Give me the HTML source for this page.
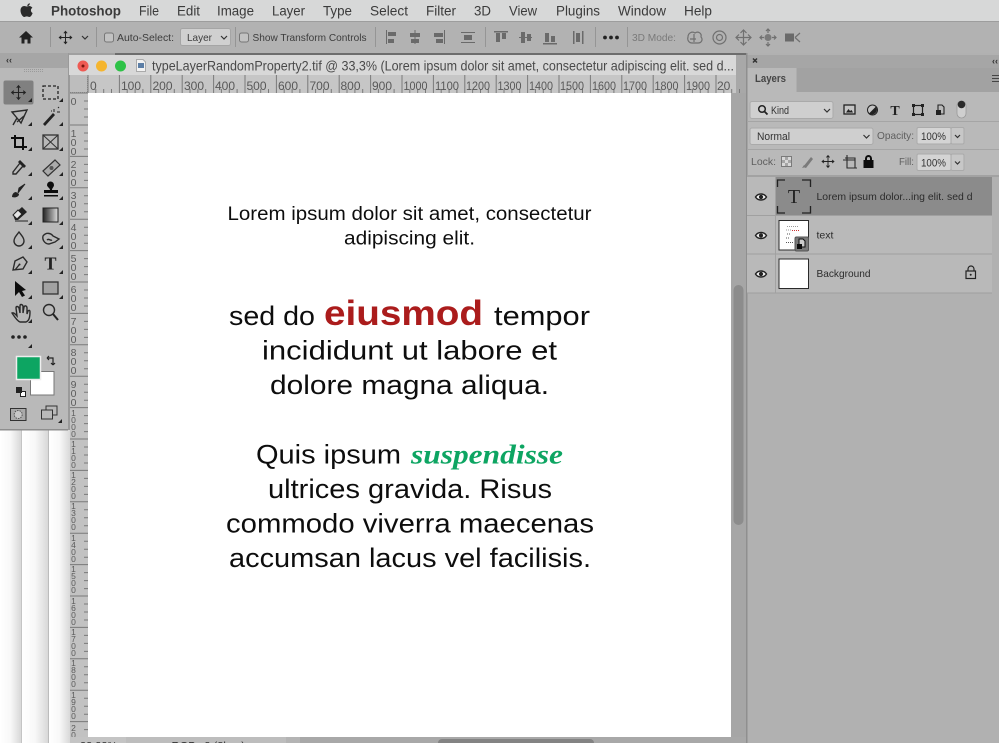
<!DOCTYPE html>
<html lang="en">
<head>
<meta charset="utf-8">
<title>Photoshop</title>
<style>
html,body{margin:0;padding:0;width:999px;height:743px;overflow:hidden;background:#fff}
svg{display:block;font-family:"Liberation Sans",sans-serif}
.m{font-size:13.5px;fill:#3a3a3a}
.o{font-size:10.5px;fill:#3c3c3c}
.r{font-size:12px;fill:#585858}
.v{font-size:10.5px;fill:#5c5c5c;text-anchor:middle}
.b{font-size:19px;fill:#111}
.c{font-size:27px;fill:#111}
.l{font-size:10px;fill:#333}
.s{fill:none;stroke:#2b2b2b;stroke-width:1.4}
.f{fill:#2b2b2b}
.g{fill:none;stroke:#6f6f6f;stroke-width:1.2}
.d{stroke:#959595;stroke-width:1}
</style>
</head>
<body>
<svg width="999" height="743" viewBox="0 0 999 743" xmlns="http://www.w3.org/2000/svg">
<defs>
<linearGradient id="sh" x1="0" x2="1" y1="0" y2="0"><stop offset="0" stop-color="#fff"/><stop offset=".5" stop-color="#f8f8f8"/><stop offset="1" stop-color="#d8d8d8"/></linearGradient>
<linearGradient id="gr" x1="0" x2="1" y1="0" y2="0"><stop offset="0" stop-color="#222"/><stop offset="1" stop-color="#ddd"/></linearGradient>
<filter id="bl" x="0" y="0" width="100%" height="100%"><feGaussianBlur stdDeviation="0.3"/></filter>
<g id="mv"><path d="M0-9V9M-9 0H9M-2.500-6.500 0-9.500 2.500-6.500M-2.500 6.500 0 9.500 2.500 6.500M-6.500-2.500-9.500 0-6.500 2.500M6.500-2.500 9.500 0 6.500 2.500" fill="none" stroke="#222" stroke-width="1.500"/></g>
<path id="cor" d="M0 4H4V0Z" fill="#222"/>
<g id="eye"><path d="M-5.500 0C-3-4 3-4 5.500 0 3 4-3 4-5.500 0Z" fill="#eee" stroke="#222" stroke-width="1.400"/><circle r="2.100" fill="#222"/></g>
<path id="tk" d="M0 0V18M7.800 14V18M15.700 14V18M23.500 14V18" stroke="#7a7a7a" stroke-width="1" fill="none"/>
<path id="vk" d="M0 0H18M14 8H18M14 16H18M14 24H18" stroke="#7a7a7a" stroke-width="1" fill="none"/>
</defs>

<g filter="url(#bl)">
<!-- background & pasteboard -->
<rect width="999" height="743" fill="#fff"/>
<rect x="0" y="430" width="21" height="313" fill="url(#sh)"/>
<rect x="21" y="430" width="1" height="313" fill="#c4c4c4"/>
<rect x="22" y="430" width="26" height="313" fill="url(#sh)"/>
<rect x="48" y="430" width="1" height="313" fill="#bcbcbc"/>
<rect x="49" y="430" width="21" height="313" fill="url(#sh)"/>
<rect x="68" y="53" width="680" height="377" fill="#a8a8a8"/>

<!-- menu bar -->
<rect width="999" height="21" fill="#d7d8d8"/>
<rect y="21" width="999" height="1" fill="#9d9d9d"/>
<path d="M29.800 3.200c-1.300.2-2.500 1.300-2.500 2.800 1.400.1 2.600-1.200 2.500-2.800ZM26.700 6.500c-.8 0-1.500-.5-2.400-.5-1.900 0-3.800 1.500-3.800 4.500 0 3 2.100 6.500 3.800 6.500.9 0 1.400-.6 2.500-.6 1.100 0 1.500.6 2.500.6 1.500 0 2.900-2.500 3.300-4-1.900-.7-2.500-3.900-.2-5.200-.8-1.200-2-1.800-3.100-1.800-1.100 0-1.800.5-2.600.5Z" fill="#2a2a2a"/>
<text x="51" y="15.500" class="m" font-weight="bold" textLength="70" lengthAdjust="spacingAndGlyphs">Photoshop</text>
<text x="139" y="15.500" class="m" textLength="20" lengthAdjust="spacingAndGlyphs">File</text>
<text x="177" y="15.500" class="m" textLength="23" lengthAdjust="spacingAndGlyphs">Edit</text>
<text x="217" y="15.500" class="m" textLength="37" lengthAdjust="spacingAndGlyphs">Image</text>
<text x="272" y="15.500" class="m" textLength="33" lengthAdjust="spacingAndGlyphs">Layer</text>
<text x="323" y="15.500" class="m" textLength="29" lengthAdjust="spacingAndGlyphs">Type</text>
<text x="370" y="15.500" class="m" textLength="38" lengthAdjust="spacingAndGlyphs">Select</text>
<text x="426" y="15.500" class="m" textLength="30" lengthAdjust="spacingAndGlyphs">Filter</text>
<text x="474" y="15.500" class="m" textLength="17" lengthAdjust="spacingAndGlyphs">3D</text>
<text x="509" y="15.500" class="m" textLength="28" lengthAdjust="spacingAndGlyphs">View</text>
<text x="556" y="15.500" class="m" textLength="44" lengthAdjust="spacingAndGlyphs">Plugins</text>
<text x="618" y="15.500" class="m" textLength="48" lengthAdjust="spacingAndGlyphs">Window</text>
<text x="684" y="15.500" class="m" textLength="28" lengthAdjust="spacingAndGlyphs">Help</text>

<!-- options bar -->
<rect y="22" width="999" height="31" fill="#b2b2b2"/>
<path d="M26 31 19 37.500H21.500V43.500H24.500V39.500H27.500V43.500H30.500V37.500H33Z" fill="#222"/>
<path class="d" d="M50.500 27V47M96.500 27V47M235.500 27V47M375.500 27V47M485.500 27V47M595.500 27V47M627.500 27V47"/>
<use href="#mv" transform="translate(65.500 37.500) scale(.65)"/>
<path d="M82 36 85 39 88 36" fill="none" stroke="#333" stroke-width="1.200"/>
<rect x="104.500" y="33" width="9" height="9" rx="2" fill="#c2c2c2" stroke="#777"/>
<text x="117" y="41" class="o" textLength="57" lengthAdjust="spacingAndGlyphs">Auto-Select:</text>
<rect x="180.500" y="28.500" width="50" height="17" rx="2" fill="#d0d0d0" stroke="#a5a5a5"/>
<text x="187" y="41" class="o" textLength="25" lengthAdjust="spacingAndGlyphs">Layer</text>
<path d="M221 36 224 39 227 36" fill="none" stroke="#333" stroke-width="1.200"/>
<rect x="239.500" y="33" width="9" height="9" rx="2" fill="#c2c2c2" stroke="#777"/>
<text x="252.500" y="41" class="o" textLength="114" lengthAdjust="spacingAndGlyphs">Show Transform Controls</text>
<!-- align icons -->
<g fill="#6a6a6a" stroke="none">
<path d="M386 30h1v14h-1zM388 32h8v4h-8zM388 39h6v4h-6z"/>
<path d="M414.500 30h1v14h-1zM410 33h10v4h-10zM411 39h8v4h-8z"/>
<path d="M444 30h1v14h-1zM434 33h9v4h-9zM436 39h7v4h-7z"/>
<path d="M461 32h14v1h-14zM461 42h14v1h-14zM464 35h8v5h-8z"/>
<path d="M494 31h14v1.500h-14zM496 33h4v9h-4zM502 33h4v6h-4z"/>
<path d="M519 37h13v1h-13zM521 32h4v11h-4zM527 34h4v7h-4z"/>
<path d="M543 43h14v1.500h-14zM545 33h4v9h-4zM551 36h4v6h-4z"/>
<path d="M573 31h1.500v13h-1.500zM582 31h1.500v13h-1.500zM576 33h4v9h-4z"/>
</g>
<circle cx="605" cy="37.500" r="1.900" fill="#222"/><circle cx="611" cy="37.500" r="1.900" fill="#222"/><circle cx="617" cy="37.500" r="1.900" fill="#222"/>
<text x="632" y="41" class="o" style="fill:#7a7a7a" textLength="44" lengthAdjust="spacingAndGlyphs">3D Mode:</text>
<!-- 3D icons -->
<path class="g" d="M688 37c0-4 4-6 7-4 3-2 7 0 6 4 2 2 1 6-3 6h-6c-3 0-5-3-4-6ZM690 39h6M694 34v8"/>
<circle class="g" cx="719.500" cy="37.500" r="6.500"/><circle class="g" cx="719.500" cy="37.500" r="3"/>
<path class="g" d="M743.500 30v15M736 37.500h15M740.500 33 743.500 30 746.500 33M740.500 42 743.500 45 746.500 42M739 34.500 736 37.500 739 40.500M748 34.500 751 37.500 748 40.500"/>
<circle cx="768" cy="37.500" r="3.500" fill="#7a7a7a"/>
<path class="g" d="M768 29v4M768 42v4M760 37.500h4M772 37.500h4M766 31 768 29 770 31M766 44 768 46 770 44M762 35.500 760 37.500 762 39.500M774 35.500 776 37.500 774 39.500"/>
<rect x="785" y="33.500" width="9" height="8" fill="#6a6a6a"/><path class="g" d="M795 37.500 800 33M795 37.500 800 42"/>

<!-- tool panel -->
<rect x="0" y="53" width="68" height="377" fill="#b9b9b9"/>
<rect x="0" y="53" width="68" height="15" fill="#a6a6a6"/>
<rect x="68" y="53" width="2" height="377" fill="#9a9a9a"/>
<rect y="429" width="68" height="1.500" fill="#8e8e8e"/>
<text x="6" y="63" font-size="9" fill="#333" font-weight="bold">‹‹</text>
<path d="M24 69.500h20M24 71.500h20" stroke="#9a9a9a" stroke-dasharray="1 1"/>
<rect x="3.500" y="80.500" width="30" height="24" rx="2" fill="#808080"/>
<use href="#mv" transform="translate(18.500 92.500) scale(.72)"/>
<rect x="43" y="86" width="15" height="13" fill="none" stroke="#222" stroke-width="1.300" stroke-dasharray="3 2"/>
<use href="#cor" x="28" y="98"/><use href="#cor" x="59" y="98"/>
<!-- lasso / magic -->
<path class="s" d="M12 112 27 110 21 123 17 118ZM17 118 13 125M24 116 17 122"/>
<path d="M43 124 53 113 55 115 45 126Z" fill="#222"/><path d="M54 109v3M57 112h3M51 111h1M58 108l1-1" stroke="#222"/>
<use href="#cor" x="28" y="122"/><use href="#cor" x="59" y="122"/>
<!-- crop / frame -->
<path d="M15 135V147H27M11 138H23V150" fill="none" stroke="#111" stroke-width="2"/>
<rect x="43" y="135" width="15" height="14" fill="none" stroke="#333" stroke-width="1.300"/>
<path d="M43 135 58 149M58 135 43 149" stroke="#333"/>
<use href="#cor" x="28" y="147"/><use href="#cor" x="59" y="147"/>
<!-- eyedropper / heal -->
<path class="s" d="M13 172 20 163 23 166 16 174 13 174Z"/><path d="M20 160 26 166 24 168 18 162Z" fill="#222"/>
<path d="M43 171 55 160 60 165 48 176Z" fill="#aaa" stroke="#333" stroke-width="1.200"/><circle cx="51.500" cy="168" r="2" fill="#555"/>
<use href="#cor" x="28" y="172"/><use href="#cor" x="59" y="172"/>
<!-- brush / stamp -->
<path d="M19 188 25 184 18 193Z" fill="#222" stroke="#222"/><path d="M12 197c0-3 2-5 4-5l3 2c0 3-4 4-7 3Z" fill="#222"/>
<path d="M47 185a3.500 3.500 0 1 1 7 0c0 2-2 3-2 5h6v3H44v-3h6c0-2-3-3-3-5ZM44 195h14v1.500H44Z" fill="#111"/>
<use href="#cor" x="28" y="196"/><use href="#cor" x="59" y="196"/>
<!-- eraser / gradient -->
<path d="M13 215 22 207 27 212 18 220H15Z" fill="#222"/><path d="M13 215 17 219 22 214 18 210Z" fill="#e4e4e4" stroke="#222"/><path d="M15 221H28" stroke="#222"/>
<rect x="43" y="208" width="15" height="14" fill="url(#gr)" stroke="#222"/>
<use href="#cor" x="28" y="221"/><use href="#cor" x="59" y="221"/>
<!-- drop / smudge -->
<path class="s" d="M19 232c-3 4-5 6-5 9a5 5 0 0 0 10 0c0-3-2-5-5-9Z"/>
<path class="s" d="M43 236c3-4 8-3 10 0l6 3-4 3-6 2c-4 0-7-4-6-8ZM47 240c2-2 3 1 5 0"/>
<use href="#cor" x="28" y="245"/><use href="#cor" x="59" y="245"/>
<!-- pen / type -->
<path class="s" d="M13 270 15 261 23 257 27 262 23 269ZM15 270 19 265"/><circle cx="19.500" cy="264.500" r="1" fill="#222"/>
<text x="50.500" y="269.500" font-family="Liberation Serif" font-size="18" font-weight="bold" text-anchor="middle" fill="#222">T</text>
<use href="#cor" x="28" y="270"/><use href="#cor" x="59" y="270"/>
<!-- arrow / rect -->
<path d="M15 281V296L19 292 22 297 25 295.500 22 291 26 290Z" fill="#111"/>
<rect x="43" y="282" width="15" height="12" fill="#a2a2a2" stroke="#333" stroke-width="1.300"/>
<use href="#cor" x="28" y="295"/><use href="#cor" x="59" y="295"/>
<!-- hand / zoom -->
<path class="s" d="M12 313c2-1 4 2 5 3l-1-8c0-2 2-2 3 0l1 5V306c0-2 2-2 3 0v7l1-6c1-2 3-1 3 1v6l1-3c1-1 2-1 2 1 0 5-1 9-4 10h-6c-3-1-6-6-8-9Z"/>
<circle class="s" cx="49" cy="310" r="5.500"/><path d="M53 314 58 320" stroke="#222" stroke-width="2"/>
<use href="#cor" x="28" y="319"/>
<!-- more -->
<circle cx="13" cy="337" r="1.800" fill="#222"/><circle cx="19" cy="337" r="1.800" fill="#222"/><circle cx="25" cy="337" r="1.800" fill="#222"/>
<use href="#cor" x="28" y="344"/>
<!-- colours -->
<rect x="30.500" y="371.500" width="23.500" height="23.500" fill="#fff" stroke="#777"/>
<rect x="16.500" y="356.500" width="24" height="23" fill="#0ca562" stroke="#eee" stroke-width="1.500"/>
<path d="M47 358H53V365M47 358 49 356M47 358 49 360M53 365 51 363M53 365 55 363" fill="none" stroke="#222" stroke-width="1.200"/>
<rect x="20.500" y="391.500" width="5" height="5" fill="#fff" stroke="#222"/>
<rect x="16" y="387" width="6" height="6" fill="#222"/>
<rect x="10.500" y="408.500" width="15.500" height="12" fill="#aaa" stroke="#333"/>
<circle cx="18.200" cy="414.500" r="4" fill="#c8c8c8" stroke="#555" stroke-dasharray="1.500 1"/>
<rect x="46" y="406" width="11" height="9" fill="#b9b9b9" stroke="#333"/>
<rect x="41.500" y="410" width="11" height="9" fill="#b9b9b9" stroke="#333"/>
<use href="#cor" x="58" y="419"/>

<!-- document window -->
<rect x="69" y="53" width="46" height="2" fill="#a0a0a0"/>
<rect x="115" y="53" width="632" height="2" fill="#6d6d6d"/>
<rect x="69" y="55" width="667" height="20" fill="#d8d8d8"/>
<circle cx="83" cy="66" r="5.500" fill="#ee5a52"/><circle cx="83" cy="66" r="1.500" fill="#7a1511"/>
<circle cx="101.500" cy="66" r="5.500" fill="#f5b52e"/>
<circle cx="120.500" cy="66" r="5.500" fill="#2fc246"/>
<path d="M136.500 59.500H143L145.500 62V71.500H136.500Z" fill="#f2f2f2" stroke="#aaa"/>
<rect x="138" y="63" width="6" height="5" fill="#5c7ea6"/>
<text x="152" y="70.500" font-size="14" fill="#4a4a4a" textLength="582" lengthAdjust="spacingAndGlyphs">typeLayerRandomProperty2.tif @ 33,3% (Lorem ipsum dolor sit amet, consectetur adipiscing elit.  sed d...</text>

<!-- horizontal ruler -->
<rect x="70" y="75" width="666" height="18" fill="#c6c6c6"/>
<rect x="70" y="75" width="18" height="18" fill="#bdbdbd"/>
<path d="M70 92.500H87.500V76" fill="none" stroke="#8a8a8a" stroke-dasharray="1 1"/>
<g>
<use href="#tk" x="88" y="75"/><use href="#tk" x="119.400" y="75"/><use href="#tk" x="150.800" y="75"/><use href="#tk" x="182.200" y="75"/><use href="#tk" x="213.600" y="75"/><use href="#tk" x="245" y="75"/><use href="#tk" x="276.400" y="75"/><use href="#tk" x="307.800" y="75"/><use href="#tk" x="339.200" y="75"/><use href="#tk" x="370.600" y="75"/><use href="#tk" x="402" y="75"/><use href="#tk" x="433.400" y="75"/><use href="#tk" x="464.800" y="75"/><use href="#tk" x="496.200" y="75"/><use href="#tk" x="527.600" y="75"/><use href="#tk" x="559" y="75"/><use href="#tk" x="590.400" y="75"/><use href="#tk" x="621.800" y="75"/><use href="#tk" x="653.200" y="75"/><use href="#tk" x="684.600" y="75"/><use href="#tk" x="716" y="75"/>
</g>
<g>
<text x="90" y="90" class="r">0</text><text x="121" y="90" class="r">100</text><text x="152.500" y="90" class="r">200</text><text x="184" y="90" class="r">300</text><text x="215" y="90" class="r">400</text><text x="246.500" y="90" class="r">500</text><text x="278" y="90" class="r">600</text><text x="309.500" y="90" class="r">700</text><text x="340.500" y="90" class="r">800</text><text x="372" y="90" class="r">900</text>
<text x="403.500" y="90" class="r" textLength="24" lengthAdjust="spacingAndGlyphs">1000</text><text x="435" y="90" class="r" textLength="24" lengthAdjust="spacingAndGlyphs">1100</text><text x="466" y="90" class="r" textLength="24" lengthAdjust="spacingAndGlyphs">1200</text><text x="497.500" y="90" class="r" textLength="24" lengthAdjust="spacingAndGlyphs">1300</text><text x="529" y="90" class="r" textLength="24" lengthAdjust="spacingAndGlyphs">1400</text><text x="560" y="90" class="r" textLength="24" lengthAdjust="spacingAndGlyphs">1500</text><text x="592" y="90" class="r" textLength="24" lengthAdjust="spacingAndGlyphs">1600</text><text x="623" y="90" class="r" textLength="24" lengthAdjust="spacingAndGlyphs">1700</text><text x="654.500" y="90" class="r" textLength="24" lengthAdjust="spacingAndGlyphs">1800</text><text x="686" y="90" class="r" textLength="24" lengthAdjust="spacingAndGlyphs">1900</text><text x="717" y="90" class="r">20</text>
</g>

<!-- vertical ruler -->
<rect x="70" y="93" width="18" height="650" fill="#c2c2c2"/>
<use href="#vk" x="70" y="93"/><use href="#vk" x="70" y="125"/><use href="#vk" x="70" y="156.400"/><use href="#vk" x="70" y="187.800"/><use href="#vk" x="70" y="219.200"/><use href="#vk" x="70" y="250.600"/><use href="#vk" x="70" y="282"/><use href="#vk" x="70" y="313.400"/><use href="#vk" x="70" y="344.800"/><use href="#vk" x="70" y="376.200"/><use href="#vk" x="70" y="407.600"/><use href="#vk" x="70" y="439"/><use href="#vk" x="70" y="470.400"/><use href="#vk" x="70" y="501.800"/><use href="#vk" x="70" y="533.200"/><use href="#vk" x="70" y="564.600"/><use href="#vk" x="70" y="596"/><use href="#vk" x="70" y="627.400"/><use href="#vk" x="70" y="658.800"/><use href="#vk" x="70" y="690.200"/><use href="#vk" x="70" y="721.600"/>
<g class="vr">
<text x="73.500" y="105" class="v">0</text>
<text x="73.500" y="137" class="v">1</text><text x="73.500" y="146" class="v">0</text><text x="73.500" y="155" class="v">0</text>
<text x="73.500" y="168" class="v">2</text><text x="73.500" y="177" class="v">0</text><text x="73.500" y="186" class="v">0</text>
<text x="73.500" y="199" class="v">3</text><text x="73.500" y="208" class="v">0</text><text x="73.500" y="217" class="v">0</text>
<text x="73.500" y="231" class="v">4</text><text x="73.500" y="240" class="v">0</text><text x="73.500" y="249" class="v">0</text>
<text x="73.500" y="262" class="v">5</text><text x="73.500" y="271" class="v">0</text><text x="73.500" y="280" class="v">0</text>
<text x="73.500" y="293" class="v">6</text><text x="73.500" y="302" class="v">0</text><text x="73.500" y="311" class="v">0</text>
<text x="73.500" y="325" class="v">7</text><text x="73.500" y="334" class="v">0</text><text x="73.500" y="343" class="v">0</text>
<text x="73.500" y="356" class="v">8</text><text x="73.500" y="365" class="v">0</text><text x="73.500" y="374" class="v">0</text>
<text x="73.500" y="388" class="v">9</text><text x="73.500" y="397" class="v">0</text><text x="73.500" y="406" class="v">0</text>
<text x="73.500" y="416" class="v" style="font-size:8.500px">1</text><text x="73.500" y="423" class="v" style="font-size:8.500px">0</text><text x="73.500" y="430" class="v" style="font-size:8.500px">0</text><text x="73.500" y="437" class="v" style="font-size:8.500px">0</text>
<text x="73.500" y="447" class="v" style="font-size:8.500px">1</text><text x="73.500" y="454" class="v" style="font-size:8.500px">1</text><text x="73.500" y="461" class="v" style="font-size:8.500px">0</text><text x="73.500" y="468" class="v" style="font-size:8.500px">0</text>
<text x="73.500" y="478" class="v" style="font-size:8.500px">1</text><text x="73.500" y="485" class="v" style="font-size:8.500px">2</text><text x="73.500" y="492" class="v" style="font-size:8.500px">0</text><text x="73.500" y="499" class="v" style="font-size:8.500px">0</text>
<text x="73.500" y="509" class="v" style="font-size:8.500px">1</text><text x="73.500" y="516" class="v" style="font-size:8.500px">3</text><text x="73.500" y="523" class="v" style="font-size:8.500px">0</text><text x="73.500" y="530" class="v" style="font-size:8.500px">0</text>
<text x="73.500" y="541" class="v" style="font-size:8.500px">1</text><text x="73.500" y="548" class="v" style="font-size:8.500px">4</text><text x="73.500" y="555" class="v" style="font-size:8.500px">0</text><text x="73.500" y="562" class="v" style="font-size:8.500px">0</text>
<text x="73.500" y="572" class="v" style="font-size:8.500px">1</text><text x="73.500" y="579" class="v" style="font-size:8.500px">5</text><text x="73.500" y="586" class="v" style="font-size:8.500px">0</text><text x="73.500" y="593" class="v" style="font-size:8.500px">0</text>
<text x="73.500" y="604" class="v" style="font-size:8.500px">1</text><text x="73.500" y="611" class="v" style="font-size:8.500px">6</text><text x="73.500" y="618" class="v" style="font-size:8.500px">0</text><text x="73.500" y="625" class="v" style="font-size:8.500px">0</text>
<text x="73.500" y="635" class="v" style="font-size:8.500px">1</text><text x="73.500" y="642" class="v" style="font-size:8.500px">7</text><text x="73.500" y="649" class="v" style="font-size:8.500px">0</text><text x="73.500" y="656" class="v" style="font-size:8.500px">0</text>
<text x="73.500" y="666" class="v" style="font-size:8.500px">1</text><text x="73.500" y="673" class="v" style="font-size:8.500px">8</text><text x="73.500" y="680" class="v" style="font-size:8.500px">0</text><text x="73.500" y="687" class="v" style="font-size:8.500px">0</text>
<text x="73.500" y="698" class="v" style="font-size:8.500px">1</text><text x="73.500" y="705" class="v" style="font-size:8.500px">9</text><text x="73.500" y="712" class="v" style="font-size:8.500px">0</text><text x="73.500" y="719" class="v" style="font-size:8.500px">0</text>
<text x="73.500" y="731" class="v" style="font-size:8.500px">2</text><text x="73.500" y="738" class="v" style="font-size:8.500px">0</text>
</g>

<!-- canvas -->
<rect x="88" y="93" width="643" height="644" fill="#fff"/>
<text x="227.500" y="220" class="b" textLength="364" lengthAdjust="spacingAndGlyphs">Lorem ipsum dolor sit amet, consectetur</text>
<text x="344" y="244.500" class="b" textLength="131" lengthAdjust="spacingAndGlyphs">adipiscing elit.</text>
<text x="229" y="325" class="c" textLength="86" lengthAdjust="spacingAndGlyphs">sed do</text>
<text x="324" y="325" font-size="35" font-weight="bold" fill="#ab1a1a" textLength="159" lengthAdjust="spacingAndGlyphs">eiusmod</text>
<text x="494" y="325" class="c" textLength="96" lengthAdjust="spacingAndGlyphs">tempor</text>
<text x="262" y="359.500" class="c" textLength="295" lengthAdjust="spacingAndGlyphs">incididunt ut labore et</text>
<text x="270" y="394" class="c" textLength="279" lengthAdjust="spacingAndGlyphs">dolore magna aliqua.</text>
<text x="256" y="463.500" class="c" textLength="145" lengthAdjust="spacingAndGlyphs">Quis ipsum</text>
<text x="411" y="463.500" font-family="Liberation Serif" font-size="27" font-weight="bold" font-style="italic" fill="#0ca562" textLength="152" lengthAdjust="spacingAndGlyphs">suspendisse</text>
<text x="268" y="498" class="c" textLength="284" lengthAdjust="spacingAndGlyphs">ultrices gravida. Risus</text>
<text x="226" y="532.500" class="c" textLength="368" lengthAdjust="spacingAndGlyphs">commodo viverra maecenas</text>
<text x="229" y="567" class="c" textLength="362" lengthAdjust="spacingAndGlyphs">accumsan lacus vel facilisis.</text>

<!-- scrollbars -->
<rect x="731" y="93" width="15" height="650" fill="#a6a6a6"/>
<rect x="733.500" y="285" width="10" height="240" rx="5" fill="#8c8c8c"/>
<rect x="70" y="737" width="676" height="6" fill="#a8a8a8"/>
<rect x="70" y="737" width="56" height="6" fill="#c4c4c4"/>
<rect x="126" y="737" width="160" height="6" fill="#bdbdbd"/>
<rect x="286" y="737" width="14" height="6" fill="#b4b4b4"/>
<rect x="438" y="739" width="156" height="8" rx="4" fill="#838383"/>
<text x="80" y="749.500" font-size="11" fill="#333">33,33%</text>
<text x="166" y="749.500" font-size="11" fill="#333" textLength="79" lengthAdjust="spacingAndGlyphs">sRGB v2 (8bpc)</text>

<!-- layers panel -->
<rect x="746" y="53" width="253" height="690" fill="#b1b1b1"/>
<rect x="746" y="92" width="253" height="85" fill="#b9b9b9"/>
<rect x="746" y="55" width="253" height="13" fill="#a6a6a6"/>
<rect x="746" y="68" width="253" height="24" fill="#a2a2a2"/>
<rect x="746" y="53" width="1.500" height="690" fill="#8f8f8f"/>
<rect x="747.500" y="68" width="49" height="25" fill="#b9b9b9"/>
<path d="M753 58.500 757 62.500M757 58.500 753 62.500" stroke="#333" stroke-width="1.500"/>
<text x="992" y="64" font-size="9" fill="#333" font-weight="bold">‹‹</text>
<text x="755" y="82" font-size="11" font-weight="bold" fill="#454545" textLength="31" lengthAdjust="spacingAndGlyphs">Layers</text>
<path d="M992 75.500h7M992 78.500h7M992 81.500h7" stroke="#444"/>
<!-- row 1 -->
<rect x="750" y="101.500" width="83" height="17" rx="2" fill="#cfcfcf" stroke="#aaa"/>
<circle cx="762" cy="109" r="3.300" fill="none" stroke="#222" stroke-width="1.500"/><path d="M764.500 111.500 767.500 114.500" stroke="#222" stroke-width="1.800"/>
<text x="771" y="114" font-size="11" fill="#333" textLength="18" lengthAdjust="spacingAndGlyphs">Kind</text>
<path d="M824 109 827 112 830 109" fill="none" stroke="#333" stroke-width="1.200"/>
<rect x="844" y="105" width="11" height="9" fill="#c4c4c4" stroke="#222" stroke-width="1.300"/><path d="M846 112.500 848.500 109 850 111 851.500 110 853 112.500Z" fill="#222"/>
<circle cx="872.500" cy="110" r="5" fill="#c4c4c4" stroke="#222" stroke-width="1"/><path d="M876 106.500A5 5 0 0 1 869 113.500Z" fill="#222"/>
<text x="895" y="115" font-family="Liberation Serif" font-size="14" font-weight="bold" text-anchor="middle" fill="#222">T</text>
<rect x="913.500" y="105.500" width="9" height="9" fill="none" stroke="#222" stroke-width="1.200"/><path d="M912 104h3v3h-3zM921 104h3v3h-3zM912 113h3v3h-3zM921 113h3v3h-3z" fill="#222"/>
<path d="M938 105h4l2 2v7h-6Z" fill="none" stroke="#222" stroke-width="1.100"/><rect x="936" y="110" width="5" height="5" fill="#222"/>
<rect x="957" y="101" width="9" height="17" rx="4.500" fill="#cfcfcf" stroke="#999" stroke-width=".8"/><circle cx="961.500" cy="104.500" r="3.800" fill="#2b2b2b"/>
<rect x="747" y="121" width="252" height="1" fill="#a5a5a5"/>
<!-- row 2 -->
<rect x="750" y="128" width="123" height="16.500" rx="2" fill="#cfcfcf" stroke="#aaa"/>
<text x="757" y="140" font-size="11" fill="#333" textLength="33" lengthAdjust="spacingAndGlyphs">Normal</text>
<path d="M863.500 135 866.500 138 869.500 135" fill="none" stroke="#333" stroke-width="1.200"/>
<text x="877" y="139" font-size="10.500" fill="#5e5e5e" textLength="37" lengthAdjust="spacingAndGlyphs">Opacity:</text>
<rect x="917" y="127.500" width="34" height="16.500" rx="1.500" fill="#d4d4d4" stroke="#aaa"/>
<text x="921" y="140" font-size="11" fill="#333" textLength="25" lengthAdjust="spacingAndGlyphs">100%</text>
<rect x="951" y="127.500" width="13" height="16.500" rx="1.500" fill="#c7c7c7" stroke="#aaa"/>
<path d="M955 135 957.500 137.500 960 135" fill="none" stroke="#333" stroke-width="1.200"/>
<rect x="747" y="149" width="252" height="1" fill="#a5a5a5"/>
<!-- row 3 -->
<text x="751" y="165" font-size="10.500" fill="#5e5e5e" textLength="25" lengthAdjust="spacingAndGlyphs">Lock:</text>
<rect x="781.500" y="156.500" width="10" height="10" fill="#a5a5a5" stroke="#7a7a7a"/><path d="M782 157h3v3h-3zM788 157h3v3h-3zM785 160h3v3h-3zM782 163h3v3h-3zM788 163h3v3h-3z" fill="#d8d8d8"/>
<path d="M803 167 811 157 813 159 806 168Z" fill="#7a7a7a"/><path d="M802 168l2-3 2 2Z" fill="#7a7a7a"/>
<use href="#mv" transform="translate(828 161.500) scale(.62)"/>
<path class="s" d="M845 158h10v10M843 160h12M847 155v13h10" style="stroke-width:1.100"/>
<path d="M865 160v-1.500a3.500 3.500 0 0 1 7 0V160h1.500v8h-10v-8Zm2 0h3v-1.500a1.500 1.500 0 0 0-3 0Z" fill="#111"/>
<text x="899" y="165" font-size="10.500" fill="#5e5e5e" textLength="15" lengthAdjust="spacingAndGlyphs">Fill:</text>
<rect x="917" y="154" width="34" height="16.500" rx="1.500" fill="#d4d4d4" stroke="#aaa"/>
<text x="921" y="166.500" font-size="11" fill="#333" textLength="25" lengthAdjust="spacingAndGlyphs">100%</text>
<rect x="951" y="154" width="13" height="16.500" rx="1.500" fill="#c7c7c7" stroke="#aaa"/>
<path d="M955 161.500 957.500 164 960 161.500" fill="none" stroke="#333" stroke-width="1.200"/>
<rect x="747" y="175" width="252" height="2" fill="#a2a2a2"/>
<!-- layers -->
<rect x="747" y="177" width="245" height="116" fill="#b9b9b9"/>
<rect x="776" y="177" width="216" height="38" fill="#8b8b8b"/>
<rect x="776" y="215" width="216" height="1" fill="#a0a0a0"/>
<rect x="775" y="177" width="1" height="116" fill="#a2a2a2"/>
<rect x="747" y="215" width="29" height="1" fill="#a0a0a0"/>
<rect x="747" y="253.500" width="245" height="1" fill="#a0a0a0"/>
<rect x="747" y="292.500" width="245" height="1" fill="#a0a0a0"/>
<use href="#eye" x="761" y="197"/><use href="#eye" x="761" y="235.500"/><use href="#eye" x="761" y="274"/>
<path d="M785 180H777.500V187M802 180H810.500V187M785 213H777.500V206M802 213H810.500V206" fill="none" stroke="#222" stroke-width="1.300"/>
<text x="794" y="203" font-family="Liberation Serif" font-size="20" text-anchor="middle" fill="#222">T</text>
<text x="816.500" y="200" font-size="10.500" fill="#2c2c2c" textLength="156" lengthAdjust="spacingAndGlyphs">Lorem ipsum dolor...ing elit.  sed d</text>
<rect x="779" y="220.500" width="29.500" height="29.500" fill="#fff" stroke="#2a2a2a"/>
<path d="M787 226.500h12M786 230h6" stroke="#999" stroke-dasharray="1 1"/><path d="M792 230.500h8" stroke="#c33" stroke-dasharray="1 1"/>
<path d="M787 234h3M786 238h3M786 242.500h7" stroke="#555" stroke-dasharray="1 1"/>
<rect x="795" y="237" width="13.500" height="14" rx="1.500" fill="#7a7a7a" stroke="#555"/>
<path d="M799 239h4l2 2v6h-6Z" fill="#ccc" stroke="#111"/><rect x="797" y="244" width="5" height="5" fill="#111"/>
<text x="816.500" y="238.500" font-size="10.500" fill="#2c2c2c" textLength="17" lengthAdjust="spacingAndGlyphs">text</text>
<rect x="779" y="259" width="29.500" height="29.500" fill="#fff" stroke="#2a2a2a"/>
<text x="816.500" y="277" font-size="10.500" fill="#2c2c2c" textLength="54" lengthAdjust="spacingAndGlyphs">Background</text>
<path d="M968 271v-2a3 3 0 0 1 6 0v2" fill="none" stroke="#222" stroke-width="1.200"/><rect x="966" y="271" width="9.500" height="7.500" fill="#b9b9b9" stroke="#222" stroke-width="1.200"/><circle cx="970.700" cy="274.700" r="1" fill="#222"/>
</g>
</svg>
</body>
</html>
